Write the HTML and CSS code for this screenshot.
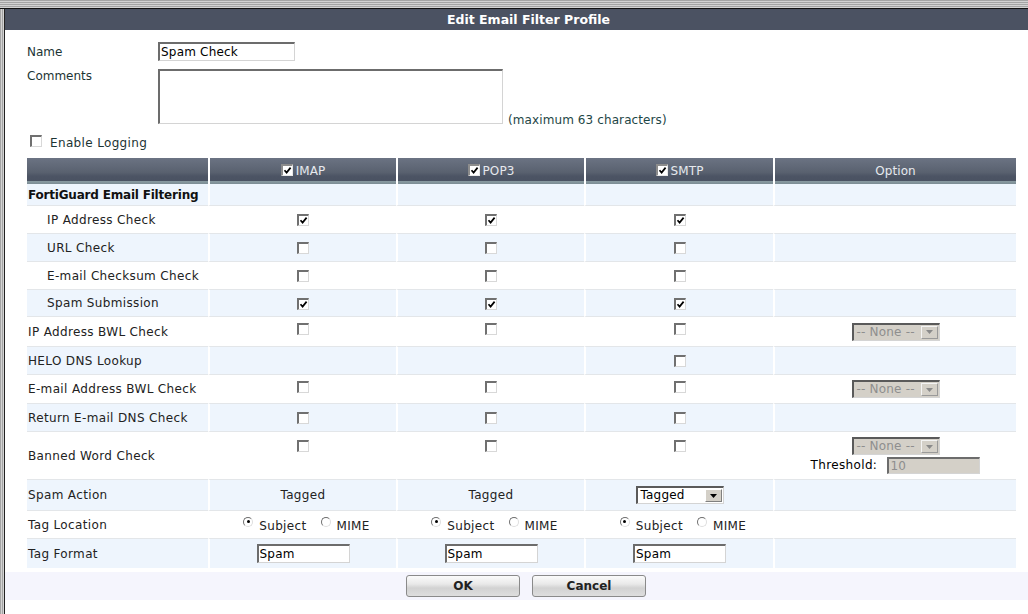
FILE: index.html
```html
<!DOCTYPE html>
<html>
<head>
<meta charset="utf-8">
<title>Edit Email Filter Profile</title>
<link rel="stylesheet" href="styles.css">
</head>
<body>
<div class="topstripe"></div>
<div class="frame">
  <div class="leftstripe"></div>
  <div class="dialog">
    <div class="titlebar">Edit Email Filter Profile</div>

    <div class="form">
      <label class="lbl">Name</label>
      <div class="field"><input class="txt name-input" type="text" value="Spam Check"></div>
      <label class="lbl lbl-top">Comments</label>
      <div class="field comments-field"><textarea class="txtarea"></textarea><span class="hint">(maximum 63 characters)</span></div>
    </div>

    <div class="logging"><span class="cb"></span><span class="logging-label">Enable Logging</span></div>

    <table class="grid">
      <colgroup>
        <col class="c0"><col class="c1"><col class="c2"><col class="c3"><col class="c4">
      </colgroup>
      <tr class="hdr">
        <th></th>
        <th><span class="cb hcb"><svg viewBox="0 0 9 9" width="9" height="9"><path d="M1.5 4.2 L3.6 6.6 L7.6 1.6" fill="none" stroke="#000" stroke-width="1.7"/></svg></span>IMAP</th>
        <th><span class="cb hcb"><svg viewBox="0 0 9 9" width="9" height="9"><path d="M1.5 4.2 L3.6 6.6 L7.6 1.6" fill="none" stroke="#000" stroke-width="1.7"/></svg></span>POP3</th>
        <th><span class="cb hcb"><svg viewBox="0 0 9 9" width="9" height="9"><path d="M1.5 4.2 L3.6 6.6 L7.6 1.6" fill="none" stroke="#000" stroke-width="1.7"/></svg></span>SMTP</th>
        <th>Option</th>
      </tr>
      <tr class="alt sect h21">
        <td class="name"><b>FortiGuard Email Filtering</b></td><td></td><td></td><td></td><td></td>
      </tr>
      <tr class="h28">
        <td class="name sub">IP Address Check</td>
        <td><span class="cb"><svg viewBox="0 0 9 9" width="9" height="9"><path d="M1.5 4.2 L3.6 6.6 L7.6 1.6" fill="none" stroke="#000" stroke-width="1.7"/></svg></span></td>
        <td><span class="cb"><svg viewBox="0 0 9 9" width="9" height="9"><path d="M1.5 4.2 L3.6 6.6 L7.6 1.6" fill="none" stroke="#000" stroke-width="1.7"/></svg></span></td>
        <td><span class="cb"><svg viewBox="0 0 9 9" width="9" height="9"><path d="M1.5 4.2 L3.6 6.6 L7.6 1.6" fill="none" stroke="#000" stroke-width="1.7"/></svg></span></td>
        <td></td>
      </tr>
      <tr class="alt h28">
        <td class="name sub">URL Check</td>
        <td><span class="cb"></span></td><td><span class="cb"></span></td><td><span class="cb"></span></td><td></td>
      </tr>
      <tr class="h28">
        <td class="name sub">E-mail Checksum Check</td>
        <td><span class="cb"></span></td><td><span class="cb"></span></td><td><span class="cb"></span></td><td></td>
      </tr>
      <tr class="alt h27">
        <td class="name sub">Spam Submission</td>
        <td><span class="cb"><svg viewBox="0 0 9 9" width="9" height="9"><path d="M1.5 4.2 L3.6 6.6 L7.6 1.6" fill="none" stroke="#000" stroke-width="1.7"/></svg></span></td>
        <td><span class="cb"><svg viewBox="0 0 9 9" width="9" height="9"><path d="M1.5 4.2 L3.6 6.6 L7.6 1.6" fill="none" stroke="#000" stroke-width="1.7"/></svg></span></td>
        <td><span class="cb"><svg viewBox="0 0 9 9" width="9" height="9"><path d="M1.5 4.2 L3.6 6.6 L7.6 1.6" fill="none" stroke="#000" stroke-width="1.7"/></svg></span></td>
        <td></td>
      </tr>
      <tr class="h30 raise">
        <td class="name">IP Address BWL Check</td>
        <td><span class="cb"></span></td><td><span class="cb"></span></td><td><span class="cb"></span></td>
        <td><span class="sel dis"><span class="sel-txt">-- None --</span><span class="sel-btn"><svg viewBox="0 0 7 4" width="7" height="4"><path d="M0 0 H7 L3.5 4 Z" fill="#8a8a8a"/></svg></span></span></td>
      </tr>
      <tr class="alt h28">
        <td class="name">HELO DNS Lookup</td>
        <td></td><td></td><td><span class="cb"></span></td><td></td>
      </tr>
      <tr class="h29 raise">
        <td class="name">E-mail Address BWL Check</td>
        <td><span class="cb"></span></td><td><span class="cb"></span></td><td><span class="cb"></span></td>
        <td><span class="sel dis"><span class="sel-txt">-- None --</span><span class="sel-btn"><svg viewBox="0 0 7 4" width="7" height="4"><path d="M0 0 H7 L3.5 4 Z" fill="#8a8a8a"/></svg></span></span></td>
      </tr>
      <tr class="alt h28">
        <td class="name">Return E-mail DNS Check</td>
        <td><span class="cb"></span></td><td><span class="cb"></span></td><td><span class="cb"></span></td><td></td>
      </tr>
      <tr class="h48 banned">
        <td class="name">Banned Word Check</td>
        <td class="top"><span class="cb"></span></td><td class="top"><span class="cb"></span></td><td class="top"><span class="cb"></span></td>
        <td>
          <span class="sel dis"><span class="sel-txt">-- None --</span><span class="sel-btn"><svg viewBox="0 0 7 4" width="7" height="4"><path d="M0 0 H7 L3.5 4 Z" fill="#8a8a8a"/></svg></span></span>
          <div class="thresh">Threshold: <span class="txt small dis">10</span></div>
        </td>
      </tr>
      <tr class="alt h31">
        <td class="name">Spam Action</td>
        <td>Tagged</td><td>Tagged</td>
        <td><span class="sel"><span class="sel-txt">Tagged</span><span class="sel-btn"><svg viewBox="0 0 7 4" width="7" height="4"><path d="M0 0 H7 L3.5 4 Z" fill="#000"/></svg></span></span></td>
        <td></td>
      </tr>
      <tr class="h28">
        <td class="name">Tag Location</td>
        <td class="radios"><span class="rb on"></span>Subject<span class="rb second"></span>MIME</td>
        <td class="radios"><span class="rb on"></span>Subject<span class="rb second"></span>MIME</td>
        <td class="radios"><span class="rb on"></span>Subject<span class="rb second"></span>MIME</td>
        <td></td>
      </tr>
      <tr class="alt h30">
        <td class="name">Tag Format</td>
        <td><input class="txt small" type="text" value="Spam"></td>
        <td><input class="txt small" type="text" value="Spam"></td>
        <td><input class="txt small" type="text" value="Spam"></td>
        <td></td>
      </tr>
    </table>

    <div class="buttons">
      <button class="btn" type="button">OK</button>
      <button class="btn" type="button">Cancel</button>
    </div>
  </div>
</div>
</body>
</html>
```
FILE: styles.css
```css
* { box-sizing: border-box; }
html, body { margin: 0; padding: 0; }
body {
  font-family: "DejaVu Sans", Verdana, sans-serif;
  font-size: 12px;
  color: #222;
  background: #fff;
  width: 1028px;
  height: 614px;
  overflow: hidden;
}

.topstripe {
  height: 9px;
  background: repeating-linear-gradient(to bottom, #a4a4a4 0 1px, #d2d2d2 1px 2px);
  border-bottom: 1px solid #111;
}
.frame { display: flex; height: 605px; }
.leftstripe {
  width: 5px;
  flex: none;
  background: repeating-linear-gradient(to right, #a4a4a4 0 1px, #d4d4d4 1px 2px);
  border-right: 1px solid #222;
}
.dialog { width: 1047px; flex: none; }

.titlebar {
  height: 21px;
  line-height: 21px;
  background: #4b5262;
  color: #fff;
  font-weight: bold;
  font-size: 12.5px;
  text-align: center;
}

.form {
  display: grid;
  grid-template-columns: 131px auto;
  row-gap: 8px;
  padding: 12px 0 0 22px;
  color: #1c3434;
}
.lbl { line-height: 18px; padding-top: 1px; }
.lbl-top { line-height: 13px; padding-top: 1px; }
.field { display: flex; }
.comments-field { align-items: flex-end; }

.txt, .txtarea {
  font-family: "DejaVu Sans", Verdana, sans-serif;
  font-size: 12px;
  color: #000;
  background: #fff;
  border-style: solid;
  border-width: 2px 1px 1px 2px;
  border-color: #6c6c6c #d4d4d4 #d4d4d4 #6c6c6c;
  margin: 0;
  outline: none;
  -webkit-appearance: none;
  appearance: none;
  border-radius: 0;
}
.txt { height: 19px; padding: 0 1px; letter-spacing: 0.2px; }
.name-input { width: 137px; }
.txtarea { width: 345px; height: 55px; resize: none; display: block; padding: 0; }
.hint {
  margin-left: 5px;
  margin-bottom: -3px;
  color: #1e4646;
  line-height: 13px;
  letter-spacing: 0.1px;
}

.logging {
  display: flex;
  align-items: flex-start;
  gap: 8px;
  margin: 11px 0 0 25px;
  color: #1c3434;
  letter-spacing: 0.35px;
}
.logging-label { line-height: 16px; }

/* checkbox */
.cb {
  display: inline-block;
  width: 12px;
  height: 12px;
  background: #fff;
  border-style: solid;
  border-width: 2px 1px 1px 2px;
  border-color: #707070 #d8d8d8 #d8d8d8 #707070;
  vertical-align: middle;
}
.cb svg { display: block; }
.hcb {
  margin-right: 3px;
  vertical-align: -1px;
  border-color: #8c8c8c #e8e8e8 #e8e8e8 #8c8c8c;
}

/* radio */
.rb {
  display: inline-block;
  width: 10px;
  height: 10px;
  border-radius: 50%;
  background: #fff;
  border: 1px solid;
  border-color: #6e6e6e #dedede #dedede #6e6e6e;
  vertical-align: 3px;
  margin-right: 6px;
  position: relative;
}
.rb.second { margin-left: 14px; }
.rb.on::after {
  content: "";
  position: absolute;
  left: 2.5px;
  top: 2.5px;
  width: 3px;
  height: 3px;
  border-radius: 50%;
  background: #000;
}
.grid td.radios { padding-left: 7px; }

/* table */
.grid {
  margin: 7px 0 0 22px;
  width: 989px;
  border-collapse: separate;
  border-spacing: 0;
  table-layout: fixed;
  letter-spacing: 0.35px;
}
.c0 { width: 181px; }
.c1 { width: 188px; }
.c2 { width: 188px; }
.c3 { width: 189px; }
.c4 { width: 243px; }

.grid th, .grid td {
  padding: 0;
  border-left: 2px solid #fff;
  text-align: center;
  vertical-align: middle;
}
.grid th:first-child, .grid td:first-child { border-left: 0; text-align: left; }
.grid td { border-top: 1px solid #e3e6e9; }
.grid tr.sect td { border-top: 0; }

.hdr { height: 26px; }
.grid th {
  color: #e6e9ee;
  font-weight: normal;
  letter-spacing: 0.1px;
  background: linear-gradient(to bottom, #6b7383 0%, #59616f 55%, #4c5464 70%, #4a5262 88%, #889aa0 89%, #7c8c94 100%);
}

.alt td { background: #eef5fd; }
.h21 { height: 21px; }
.h27 { height: 27px; }
.h28 { height: 28px; }
.h29 { height: 29px; }
.h30 { height: 30px; }
.h31 { height: 31px; }
.h48 { height: 48px; }

.name { padding-left: 1px !important; color: #222; }
.name.sub { padding-left: 20px !important; }
.name b { color: #111; letter-spacing: -0.2px; }

.raise td .cb { vertical-align: 2px; }
.grid td.top { vertical-align: top; padding-top: 6px; }

/* selects */
.sel {
  display: inline-flex;
  width: 88px;
  height: 18px;
  background: #fff;
  border-style: solid;
  border-width: 2px 1px 1px 2px;
  border-color: #5a5a5a #d4d4d4 #d4d4d4 #5a5a5a;
  vertical-align: middle;
  text-align: left;
  letter-spacing: 0.2px;
}
.sel-txt {
  flex: 1;
  padding-left: 3px;
  line-height: 14px;
  color: #000;
  white-space: nowrap;
  overflow: hidden;
}
.sel-btn {
  width: 17px;
  flex: none;
  margin: 1px;
  background: #d4d0c8;
  border-style: solid;
  border-width: 1px;
  border-color: #fff #808080 #808080 #fff;
  display: flex;
  align-items: center;
  justify-content: center;
}
.sel-btn svg { display: block; }
.sel.dis { background: #d4d0c8; }
.sel.dis .sel-txt { color: #8e8e8e; }
.sel.dis .sel-btn { border-color: #f4f4f4 #9a9a9a #9a9a9a #f4f4f4; }

.thresh {
  margin-top: 2px;
  color: #000;
  line-height: 17px;
}
.txt.small { width: 93px; }
.thresh .txt {
  display: inline-block;
  height: 17px;
  line-height: 14px;
  margin-left: 6px;
  text-align: left;
  vertical-align: top;
}
.txt.dis { background: #d4d0c8; color: #8e8e8e; }

/* buttons */
.buttons {
  margin-top: 4px;
  height: 28px;
  background: #f5f5fd;
  display: flex;
  justify-content: center;
  align-items: center;
  gap: 12px;
  padding-right: 5px;
}
.btn {
  width: 114px;
  height: 22px;
  margin: 0;
  padding: 0;
  border: 1px solid #8a8a8a;
  border-radius: 3px;
  background: linear-gradient(to bottom, #fbfbfb 0%, #e9e9e9 40%, #d2d2d2 60%, #dedede 100%);
  font-family: "DejaVu Sans", Verdana, sans-serif;
  font-size: 12px;
  font-weight: bold;
  color: #222;
}
```
